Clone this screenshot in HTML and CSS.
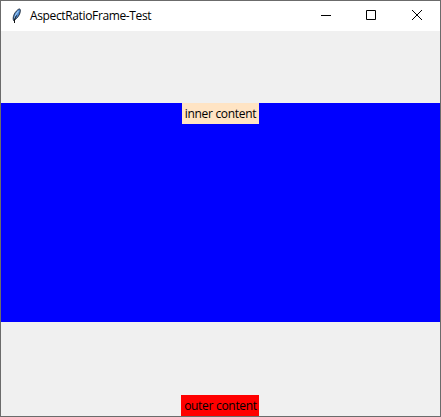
FILE: index.html
```html
<!DOCTYPE html>
<html lang="en">
<head>
<meta charset="utf-8">
<title>AspectRatioFrame-Test</title>
<link rel="stylesheet" href="styles.css">
</head>
<body>
<div class="window">
  <header class="titlebar">
    <svg class="feather" width="16" height="16" viewBox="0 0 16 16">
      <path d="M4.500 12.500C3.500 9.500 5 5 8.500 2C10.500 .3 11.800 .8 11.300 3.500C10.800 7 8.500 10.500 4.500 12.500Z" fill="#4b86cc" stroke="#15202e" stroke-width=".9"/>
      <path d="M5.500 10.500C6 7.500 7.500 5 9.500 3" fill="none" stroke="#9cc8f2" stroke-width="1.100"/>
      <path d="M5.500 15V12C6 10.500 6.500 9 7.500 7.500" fill="none" stroke="#111" stroke-width="1"/>
    </svg>
    <h1 class="title">AspectRatioFrame-Test</h1>
    <svg class="controls" width="138" height="30" viewBox="0 0 138 30" fill="none" stroke="#000">
      <path d="M19 14.500h10M64.500 9.500h9v9h-9zM110 9l10 10M120 9l-10 10"/>
    </svg>
  </header>
  <main class="outer">
    <section class="inner"><span class="label label-inner">inner content</span></section>
    <span class="label label-outer">outer content</span>
  </main>
</div>
</body>
</html>
```
FILE: styles.css
```css
* { box-sizing: border-box; }
body { margin: 0; font-family: "Open Sans", "Noto Sans", sans-serif; font-size: 12px; color: #000; }
.window { width: 441px; height: 417px; border: 1px solid #6b6b6b; display: flex; flex-direction: column; background: #f0f0f0; overflow: hidden; }
.titlebar { flex: 0 0 30px; display: flex; align-items: center; background: #fff; padding-left: 8px; }
.title { margin: 0 auto 0 5px; font-size: 12px; font-weight: 400; line-height: 16px; letter-spacing: -0.36px; white-space: nowrap; }
.outer { flex: 1; display: flex; flex-direction: column; align-items: center; justify-content: space-between; padding-top: 72px; }
.inner { width: 100%; height: 219px; background: #00f; display: flex; justify-content: center; align-items: flex-start; }
.label { height: 21px; line-height: 21px; letter-spacing: -0.3px; text-align: center; white-space: nowrap; }
.label-inner { width: 77px; background: #ffe4c4; }
.label-outer { width: 78px; margin-right: 1px; padding-left: 1px; background: #f00; }
```
